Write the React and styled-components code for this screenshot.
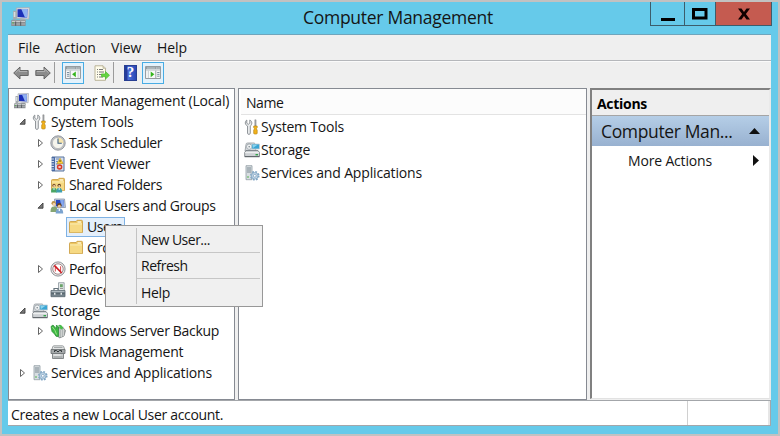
import React from "react";
import styled, { createGlobalStyle, css } from "styled-components";

const GlobalStyle = createGlobalStyle`
  * { box-sizing: border-box; }
  body { margin: 0; overflow: hidden; }
`;

const Desktop = styled.div`
  width: 780px;
  height: 436px;
  padding: 2px;
  background: #c2c1c1;
  font: 14px/20px "Open Sans", "Noto Sans", sans-serif;
  color: #151515;
`;

const Window = styled.div`
  position: relative;
  display: flex;
  flex-direction: column;
  width: 776px;
  height: 432px;
  padding: 0 7px 8px 6px;
  background: #66caea;
`;

const TitleBar = styled.header`
  display: grid;
  grid-template-columns: 295px 1fr 122px;
  height: 32px;
  flex: none;
  margin-right: -1px;
`;

const TitleIcon = styled.div`
  padding: 5px 0 0 2px;
`;

const Title = styled.h1`
  margin: 0;
  font-size: 17.5px;
  font-weight: 400;
  line-height: 31px;
  letter-spacing: -0.28px;
  white-space: nowrap;
`;

const Caption = styled.div`
  display: grid;
  grid-template-columns: 34px 31px 55px;
  width: 122px;
  height: 24px;
  border: 1px solid #3c5d6b;
  border-top: 0;
`;

const CaptionButton = styled.div`
  display: flex;
  align-items: center;
  justify-content: center;
  border-right: 1px solid #3c5d6b;
  ${(p) => p.$close && css`
    background: #c55b50;
    border-right: 0;
  `}
`;

const Client = styled.main`
  display: flex;
  flex-direction: column;
  flex: 1;
  min-height: 0;
  background: #efefef;
  border-top: 1px solid #6fa5bc;
`;

const MenuBar = styled.nav`
  display: flex;
  height: 26px;
  padding-left: 10px;
  line-height: 26px;
  border-bottom: 1px solid #b5b7bb;
`;

const MenuEntry = styled.span`
  width: ${(p) => p.$w}px;
  letter-spacing: -0.05px;
`;

const ToolBar = styled.div`
  display: flex;
  align-items: center;
  height: 27px;
  padding-left: 4px;
  padding-bottom: 5px;
  border-top: 1px solid #fafafa;
`;

const ToolSlot = styled.div`
  display: flex;
  align-items: center;
  justify-content: center;
  width: ${(p) => p.$w || 22}px;
  height: 22px;
  flex: none;
  ${(p) => p.$on && css`
    background: #e3f2fc;
    border: 1px solid #48ace4;
  `}
`;

const ToolDivider = styled.div`
  width: 1px;
  height: 21px;
  margin: 0 ${(p) => p.$after}px 0 ${(p) => p.$before}px;
  background: #9b9b9b;
`;

const Panels = styled.div`
  display: grid;
  grid-template-columns: 227px 349px 181px;
  column-gap: 3px;
  height: 312px;
  flex: none;
`;

const Pane = styled.section`
  background: #fff;
  border: 1px solid #868a92;
  min-width: 0;
`;

const TreePane = styled(Pane)`
  padding-top: 2px;
`;

const TreeRow = styled.div`
  display: flex;
  align-items: center;
  height: 20.92px;
  padding-left: ${(p) => p.$indent}px;
`;

const Toggle = styled.span`
  display: flex;
  align-items: center;
  width: 13px;
  flex: none;
`;

const NodeBody = styled.span`
  display: flex;
  align-items: center;
  gap: ${(p) => p.$gap || 3}px;
  height: 20px;
  white-space: nowrap;
  ${(p) => p.$selected && css`
    margin: 0 0 0 -2px;
    padding: 0 2px 0 1px;
    border: 1px solid #7fb2e4;
    background: #e4effb;
  `}
`;

const Label = styled.span`
  letter-spacing: ${(p) => p.$ls || 0}px;
  white-space: nowrap;
`;

const ListHeader = styled.div`
  height: 26px;
  margin-left: 2px;
  padding: 4px 0 0 5px;
  background: #fcfcfc;
  border-bottom: 1px solid #e3e3e3;
  letter-spacing: -0.45px;
`;

const ListRow = styled.div`
  display: flex;
  align-items: center;
  height: 23px;
  padding-left: 5px;
  gap: 1px;
`;

const ActionsPane = styled(Pane)`
  height: 311px;
  border-width: 2px 2px 1px 2px;
  border-color: #808080 #eaeaea #e2e2e2 #808080;
`;

const ActionsHeader = styled.div`
  height: 26px;
  padding: 4px 0 0 5px;
  background: #efefef;
  border-bottom: 1px solid #a5a5a5;
  font-weight: 700;
  letter-spacing: -0.3px;
  color: #000;
`;

const ActionsGroup = styled.div`
  display: flex;
  align-items: center;
  justify-content: space-between;
  height: 30px;
  padding: 0 9px 0 9px;
  background: linear-gradient(#b5cee7, #98b1d0);
  font-size: 17.5px;
  letter-spacing: -0.36px;
`;

const ActionsItem = styled.div`
  display: flex;
  align-items: center;
  justify-content: space-between;
  height: 29px;
  padding: 0 10px 0 36px;
`;

const StatusBar = styled.footer`
  display: grid;
  grid-template-columns: 680px 80px 2px;
  flex: 1;
  background: #fff;
  border: solid #a3a6aa;
  border-width: 1px 1px 1px 0;
`;

const StatusText = styled.div`
  padding: 4px 0 0 3px;
  border-right: 1px solid #d0d0d0;
  letter-spacing: -0.32px;
`;

const StatusGrip = styled.div`
  grid-column: 3;
  background: #e6e6e6;
`;

const ContextMenu = styled.div`
  position: absolute;
  left: 103px;
  top: 223px;
  width: 158px;
  height: 82px;
  padding: 2px;
  background: #f0f0f0;
  border: 1px solid #989898;
`;

const MenuGutter = styled.div`
  height: 76px;
  margin-left: 28px;
  border-left: 1px solid #c3c3c3;
`;

const MenuRow = styled.div`
  height: ${(p) => p.$h}px;
  padding-left: 4px;
  line-height: ${(p) => p.$lh}px;
  border-bottom: ${(p) => (p.$last ? "0" : "1px solid #c6c6c6")};
`;

const Svg = ({ children, w = 16, h = 16, box }) => (
  <svg width={w} height={h} viewBox={box || `0 0 ${w} ${h}`}>{children}</svg>
);

const ComputerIcon = ({ size = 16 }) => (
  <Svg w={size} h={size} box="0 0 16 16">
    <path d="M5 .8L15.500.5l-.4 9.200L5.500 9z" fill="#dcdfe4" stroke="#a9adb6" strokeWidth=".7" />
    <path d="M6 1.700l8-.2-.3 7-7.700-.5z" fill="#1c2fb8" />
    <path d="M9 1.600l5-.1-.3 7-1.700-.1z" fill="#8fb0f2" />
    <path d="M2.500 3h2.800v7H2.500z" fill="#a5aaae" /><path d="M3 4h1.300v4H3z" fill="#d4dde0" />
    <path d="M8.500 9.500h3.500l1 1.700H7.500z" fill="#b1b5ba" />
    <path d="M1 11.200q0-1 1-1h9.500q1 0 1 1v4H1z" fill="#8b8f92" />
    <path d="M1.500 11.500h10.500" stroke="#cdd0d2" strokeWidth=".9" />
    <path d="M1.500 13.600h10.500" stroke="#b5b9bb" strokeWidth=".7" />
    <path d="M4.500 11.500v3.500M8.500 11.500v3.500" stroke="#5c6164" strokeWidth=".9" />
    <path d="M2 12.600h1" stroke="#55b54a" />
  </Svg>
);

const ToolsIcon = () => (
  <Svg>
    <path d="M2.800 1v3.200l1.400 1.200 1.600-1.200V1c1.400.6 2 1.800 2 3.100 0 1.400-.7 2.200-1.500 2.900V14.200c0 1.600-2.800 1.600-2.800 0V7C2.300 6.300 1.300 5.500 1.300 4 1.300 2.700 1.900 1.600 2.800 1z" fill="#e9ebec" stroke="#868b90" strokeWidth=".9" />
    <path d="M10.800.8h1.300v6.400h-1.300z" fill="#a5a9ad" stroke="#777" strokeWidth=".4" />
    <path d="M9.700 7h3.500v1.800l-.9 1 .9 1.200v3.500c-.9.8-2.600.8-3.500 0V11l.9-1.200-.9-1z" fill="#f2b21c" stroke="#ae7c0c" strokeWidth=".6" />
  </Svg>
);

const ClockIcon = () => (
  <Svg>
    <circle cx="8" cy="8" r="7.200" fill="#c3c6ca" stroke="#82878d" strokeWidth=".8" />
    <circle cx="8" cy="8" r="5.600" fill="#f6f5ed" stroke="#9a9da1" strokeWidth=".5" />
    <path d="M8 2.500A5.500 5.500 0 0 1 13.500 8H8z" fill="#f5e4b0" />
    <path d="M8 3.500V8.300h3.800" fill="none" stroke="#3d5f80" strokeWidth="1.100" />
  </Svg>
);

const EventIcon = () => (
  <Svg>
    <path d="M2 1h12v14H2z" fill="#d5deef" stroke="#57729c" />
    <path d="M2 1h3v14H2z" fill="#4b6ba5" />
    <path d="M1 3h3M1 5.500h3M1 8h3M1 10.500h3M1 13h3" stroke="#dce6f2" strokeWidth=".9" />
    <path d="M6 3h3M6 5.500h2M6 8h2" stroke="#6988b9" />
    <path d="M10 2.200l3.200 5.300H7z" fill="#ffd335" stroke="#b98d17" strokeWidth=".6" />
    <path d="M10 4v2" stroke="#5b430a" />
    <circle cx="9.600" cy="11" r="2.800" fill="#d83c29" />
    <path d="M8.600 10l2 2m0-2l-2 2" stroke="#fff" strokeWidth=".9" />
  </Svg>
);

const FolderArt = () => (
  <>
    <path d="M1.500 3.500q0-1 1-1H8l1-1.200h4.500q1 0 1 1v11.200h-13z" fill="#edc662" stroke="#c99b3c" strokeWidth=".8" />
    <path d="M9.500 2.300h3.600v1.400H9.500z" fill="#fff8da" />
    <path d="M2 4.700h12v8.600H2z" fill="#f6d983" />
    <path d="M2 4.900h12" stroke="#fdf0b8" />
  </>
);

const FolderIcon = () => <Svg><FolderArt /></Svg>;

const SharedIcon = () => (
  <Svg>
    <FolderArt />
    <circle cx="4" cy="8.400" r="1.700" fill="#7d542f" />
    <circle cx="4.200" cy="9" r="1.100" fill="#f1cfa5" />
    <path d="M1 15.500c0-3.200 1-4.700 3-4.700s3 1.500 3 4.700z" fill="#4aa565" />
    <circle cx="9.200" cy="8.400" r="1.700" fill="#5f3b1c" />
    <circle cx="9.300" cy="9" r="1.100" fill="#f1cfa5" />
    <path d="M6.200 15.500c0-3.200 1-4.700 3-4.700s3 1.500 3 4.700z" fill="#3f9fae" />
    <path d="M4 10.900v2M9.200 10.900v2" stroke="#e9f4f0" />
  </Svg>
);

const UsersIcon = () => (
  <Svg>
    <path d="M4.500 1h10l1 8.500H5z" fill="#c1cbdc" stroke="#8794ab" strokeWidth=".8" />
    <path d="M6 2h7.500l.6 6.300H6z" fill="#2747be" /><path d="M10 2h3.500l.6 6.300h-2.500z" fill="#84a7ee" />
    <circle cx="3.700" cy="5.300" r="2.200" fill="#bb9148" /><circle cx="4" cy="6.200" r="1.500" fill="#f1cfaa" />
    <path d="M.5 14c0-3.800 1-5.500 3.500-5.500S7.500 10 7.500 14z" fill="#86a573" />
    <circle cx="9.300" cy="7.200" r="2.300" fill="#684524" /><circle cx="9.300" cy="8.200" r="1.500" fill="#edc596" />
    <path d="M5.700 15.500c0-3.700 1.200-5 3.600-5s3.900 1.300 3.900 5z" fill="#7ba3cf" />
    <path d="M9.300 10.500v2.500" stroke="#fff" strokeWidth="1.200" />
  </Svg>
);

const PerformanceIcon = () => (
  <Svg>
    <circle cx="8" cy="8" r="7.100" fill="#e9e9ea" stroke="#85888c" strokeWidth=".9" />
    <circle cx="8" cy="8" r="5.200" fill="#fff" stroke="#8e6f6f" strokeWidth=".8" />
    <path d="M5.300 10.500V5.500M10.600 10.500V5.300" fill="none" stroke="#d9474a" strokeWidth="1" />
    <path d="M4.300 4.300l7.400 7.700" stroke="#cf1c22" strokeWidth="1.700" />
  </Svg>
);

const DeviceIcon = () => (
  <Svg>
    <path d="M8.500.7h5.700v8H8.500z" fill="#e4e9e9" stroke="#8b979d" strokeWidth=".8" />
    <path d="M10 2.200h2.800v3H10z" fill="#69a26a" /><path d="M10 6.500h3" stroke="#999" />
    <path d="M4 8.500V6.500h4v2" fill="none" stroke="#65727b" strokeWidth="1.200" />
    <path d="M1 8.500h14v6.200H1z" fill="#75838b" stroke="#56636c" strokeWidth=".8" />
    <path d="M1.500 9.300h13" stroke="#bdc7cb" /><path d="M1.500 11.700h13" stroke="#4d5a62" strokeWidth=".8" />
    <path d="M4 10.800h1.500v2H4zM10.500 10.800H12v2h-1.500z" fill="#e3e7e7" />
  </Svg>
);

const StorageIcon = () => (
  <Svg>
    <path d="M2 2.500Q2 1 3.500 1h7L12 9H1z" fill="#d6dadd" stroke="#92989d" strokeWidth=".8" />
    <circle cx="5.200" cy="4.700" r="2.700" fill="#f0f2f3" stroke="#8d969d" strokeWidth=".7" />
    <circle cx="5.200" cy="4.700" r=".8" fill="#78838b" />
    <path d="M7.700 2h7.800v5H7.700z" fill="#39a5d5" stroke="#c5ced3" strokeWidth=".8" />
    <path d="M8.500 2.800h5L9 6z" fill="#8bd3ec" />
    <path d="M2 8.500h12l1.500 2v4.300H.7v-4.300z" fill="#cdd1d4" stroke="#70777c" strokeWidth=".8" />
    <path d="M1 10.700h14" stroke="#f4f5f5" /><path d="M1 14.500h14" stroke="#62686c" />
    <path d="M11.500 12.700H14" stroke="#32a54a" strokeWidth="1.400" />
  </Svg>
);

const BackupIcon = () => (
  <Svg>
    <path d="M7 4.500l5-1 3.500 4-1.500 5.500-4.500 2-3-3z" fill="#a9aeae" stroke="#737878" strokeWidth=".7" />
    <path d="M9 6v8M11.300 5v9M13.300 6v7" stroke="#e4e7e6" strokeWidth=".8" />
    <path d="M1 3.500l2-1.500 3 3.500.5-3.500 2 2v9.500L6 13.300 4.500 11 2 8.500z" fill="#3db944" stroke="#24852f" strokeWidth=".7" />
    <path d="M2.500 4l2.500 3.500 1.500 4" fill="none" stroke="#9be284" />
    <path d="M8 2.500q3-2 4.500 1.500l1-.3-1.500 3-3-2 1.200-.2Q9.500 3 8 2.500z" fill="#48bd4a" />
  </Svg>
);

const DiskIcon = () => (
  <Svg>
    <path d="M4 1.800h8.500q1 0 1.300 1l1.200 4H1.500l1.200-4q.3-1 1.300-1z" fill="#e3e5e5" stroke="#858a8c" strokeWidth=".8" />
    <path d="M4 3.500h8.500" stroke="#a5a9ab" />
    <path d="M1 5.500h14v4H1z" fill="#a4a8aa" stroke="#666b6d" strokeWidth=".8" />
    <path d="M4.500 8V6.500h2L8 8l1.500-1.500h2V8" fill="none" stroke="#33383a" strokeWidth="1" />
    <path d="M2.500 9.500h11v5h-11z" fill="#c9cccd" stroke="#6c7173" strokeWidth=".8" />
    <path d="M3.500 11h7" stroke="#f6f6f6" /><path d="M3.500 13h9" stroke="#858a8c" strokeWidth=".8" />
  </Svg>
);

const ServicesIcon = () => (
  <Svg>
    <path d="M2 .7h6v14H2z" fill="#d8dee1" stroke="#919ca3" strokeWidth=".8" />
    <path d="M3 3h4M3 5h4M3 7h4" stroke="#65737d" strokeWidth=".8" />
    <path d="M3 12h2" stroke="#52b24e" strokeWidth="1.200" />
    <circle cx="10.800" cy="10.800" r="4" fill="none" stroke="#7fa4c3" strokeWidth="1.600" strokeDasharray="1.750 1.392" />
    <circle cx="10.800" cy="10.800" r="3.300" fill="#c3d7e7" stroke="#7fa4c3" strokeWidth=".8" />
    <circle cx="10.800" cy="10.800" r="1.400" fill="#fff" stroke="#769bbb" strokeWidth=".7" />
  </Svg>
);

const OpenArrow = () => (
  <Svg w={8} h={8}><path d="M6 1v5.200H1z" fill="#7a7a7a" stroke="#3c3c3c" strokeWidth=".9" /></Svg>
);
const ClosedArrow = () => (
  <Svg w={8} h={10}><path d="M1.500 1.500v7L5.500 5z" fill="#fff" stroke="#555" strokeWidth=".9" /></Svg>
);

const NavArrow = ({ flip }) => (
  <Svg w={16} h={14}>
    <g transform={flip ? "translate(16 0) scale(-1 1)" : undefined}>
      <path d="M.7 7L7 1v3.500h8.200v5H7V13z" fill="#8c8c8c" stroke="#5e5e5e" strokeWidth=".9" />
      <path d="M2.500 6.700l3.700-3.500v2.200h8" fill="none" stroke="#b9b9b9" strokeWidth=".9" />
    </g>
  </Svg>
);

const PaneIcon = ({ right }) => (
  <Svg w={16} h={13} box="0 0 17 14">
    <path d="M.5.500h16v13H.5z" fill="#f8f9f9" stroke="#8a9094" />
    <path d="M1 1h15v2.600H1z" fill="#8e999f" /><path d="M2 2.200h9" stroke="#dfe4e6" strokeWidth=".8" /><path d="M12 2.200h3.500" stroke="#fff" strokeDasharray="1 .5" />
    <path d="M1 4.600h15" stroke="#c7cdd0" />
    <path d={right ? "M11.500 5v8" : "M5.500 5v8"} stroke="#949da2" />
    <path d={right ? "M13 7h2.500M13 9h2.500M13 11h2.500" : "M2 7h2.500M2 9h2.500M2 11h2.500"} stroke="#6f8799" />
    <path d={right ? "M3.500 5v8" : "M14 5v8"} stroke="#c4cacd" />
    <path d={right ? "M6 5.800v6.400L10 9z" : "M11.500 5.800v6.400L7.500 9z"} fill="#36b51e" />
  </Svg>
);

const ExportIcon = () => (
  <Svg w={17} h={16}>
    <path d="M2 .8h8l2.500 2.500v12H2z" fill="#fffdec" stroke="#b3ac8e" strokeWidth=".9" />
    <path d="M10 .8v2.500h2.500" fill="#dfdac3" stroke="#a59f83" strokeWidth=".6" />
    <path d="M4 4.500h1M6 4.500h4M4 7h1M6 7h5M4 9.500h1M6 9.500h3M4 12h1M6 12h4" stroke="#777" />
    <path d="M8.500 8.900h4V6.500l4 3.800-4 3.800v-2.400h-4z" fill="#65d43f" stroke="#4bbb2e" strokeWidth=".7" />
  </Svg>
);

const HelpGlyph = styled.span`
  display: flex;
  align-items: center;
  justify-content: center;
  width: 13px;
  height: 16px;
  background: linear-gradient(90deg, #253c9b 0 2px, #4d70da 3px, #2946b4);
  border: 1px solid #273e92;
  color: #fff;
  font: 700 15px/15px "Liberation Serif", serif;
`;

const TREE = [
  { text: "Computer Management (Local)", Icon: ComputerIcon, indent: 4, ls: -0.21, gap: 4 },
  { text: "System Tools", Icon: ToolsIcon, indent: 10, arrow: "open", ls: -0.26 },
  { text: "Task Scheduler", Icon: ClockIcon, indent: 28, arrow: "closed", ls: -0.36 },
  { text: "Event Viewer", Icon: EventIcon, indent: 28, arrow: "closed", ls: -0.24 },
  { text: "Shared Folders", Icon: SharedIcon, indent: 28, arrow: "closed", ls: -0.34 },
  { text: "Local Users and Groups", Icon: UsersIcon, indent: 28, arrow: "open", ls: -0.38 },
  { text: "Users", Icon: FolderIcon, indent: 46, arrow: "none", selected: true, ls: -0.45 },
  { text: "Groups", Icon: FolderIcon, indent: 46, arrow: "none", ls: -0.3 },
  { text: "Performance", Icon: PerformanceIcon, indent: 28, arrow: "closed", ls: -0.3 },
  { text: "Device Manager", Icon: DeviceIcon, indent: 28, arrow: "none", ls: -0.3 },
  { text: "Storage", Icon: StorageIcon, indent: 10, arrow: "open", ls: -0.1 },
  { text: "Windows Server Backup", Icon: BackupIcon, indent: 28, arrow: "closed", ls: -0.32 },
  { text: "Disk Management", Icon: DiskIcon, indent: 28, arrow: "none", ls: -0.25 },
  { text: "Services and Applications", Icon: ServicesIcon, indent: 10, arrow: "closed", ls: -0.16 },
];

const LIST = [
  { text: "System Tools", Icon: ToolsIcon, ls: -0.22 },
  { text: "Storage", Icon: StorageIcon, ls: -0.1 },
  { text: "Services and Applications", Icon: ServicesIcon, ls: -0.16 },
];

export default function App() {
  return (
    <>
      <GlobalStyle />
      <Desktop>
        <Window>
          <TitleBar>
            <TitleIcon><ComputerIcon size={20} /></TitleIcon>
            <Title>Computer Management</Title>
            <Caption>
              <CaptionButton>
                <Svg w={16} h={16}><path d="M1 13.500h14" stroke="#000" strokeWidth="3" /></Svg>
              </CaptionButton>
              <CaptionButton>
                <Svg w={16} h={12}><path d="M1.500 1.500h12.500v8.500H1.500z" fill="none" stroke="#000" strokeWidth="3" /></Svg>
              </CaptionButton>
              <CaptionButton $close>
                <Svg w={14} h={12}><path d="M1 .5h3.500L7 4 9.500.5H13L8.900 6l4.100 5.500H9.500L7 8l-2.500 3.500H1L5.100 6z" fill="#100" /></Svg>
              </CaptionButton>
            </Caption>
          </TitleBar>
          <Client>
            <MenuBar>
              <MenuEntry $w={37}>File</MenuEntry>
              <MenuEntry $w={56}>Action</MenuEntry>
              <MenuEntry $w={46}>View</MenuEntry>
              <MenuEntry $w={40}>Help</MenuEntry>
            </MenuBar>
            <ToolBar>
              <ToolSlot $w={18}><NavArrow /></ToolSlot>
              <ToolSlot $w={25}><NavArrow flip /></ToolSlot>
              <ToolDivider $before={-1} $after={7} />
              <ToolSlot $on><PaneIcon /></ToolSlot>
              <ToolSlot $w={34}><ExportIcon /></ToolSlot>
              <ToolDivider $before={-5} $after={5} />
              <ToolSlot $w={23}><HelpGlyph>?</HelpGlyph></ToolSlot>
              <ToolSlot $on><PaneIcon right /></ToolSlot>
            </ToolBar>
            <Panels>
              <TreePane>
                {TREE.map(({ text, Icon, indent, arrow, selected, ls, gap }) => (
                  <TreeRow key={text} $indent={indent}>
                    {arrow && (
                      <Toggle>
                        {arrow === "open" && <OpenArrow />}
                        {arrow === "closed" && <ClosedArrow />}
                      </Toggle>
                    )}
                    <NodeBody $gap={gap} $selected={selected}>
                      <Icon />
                      <Label $ls={ls}>{text}</Label>
                    </NodeBody>
                  </TreeRow>
                ))}
              </TreePane>
              <Pane>
                <ListHeader>Name</ListHeader>
                {LIST.map(({ text, Icon, ls }) => (
                  <ListRow key={text}>
                    <Icon />
                    <Label $ls={ls}>{text}</Label>
                  </ListRow>
                ))}
              </Pane>
              <ActionsPane>
                <ActionsHeader>Actions</ActionsHeader>
                <ActionsGroup>
                  Computer Man...
                  <Svg w={11} h={6}><path d="M0 6L5.500 0 11 6z" fill="#111" /></Svg>
                </ActionsGroup>
                <ActionsItem>
                  <Label $ls={-0.17}>More Actions</Label>
                  <Svg w={6} h={11}><path d="M0 0l6 5.500L0 11z" fill="#111" /></Svg>
                </ActionsItem>
              </ActionsPane>
            </Panels>
            <StatusBar>
              <StatusText>Creates a new Local User account.</StatusText>
              <StatusGrip />
            </StatusBar>
          </Client>
          <ContextMenu>
            <MenuGutter>
              <MenuRow $h={25} $lh={23}><Label $ls={-0.5}>New User...</Label></MenuRow>
              <MenuRow $h={26} $lh={26}><Label $ls={-0.5}>Refresh</Label></MenuRow>
              <MenuRow $h={25} $lh={28} $last><Label $ls={-0.35}>Help</Label></MenuRow>
            </MenuGutter>
          </ContextMenu>
        </Window>
      </Desktop>
    </>
  );
}
